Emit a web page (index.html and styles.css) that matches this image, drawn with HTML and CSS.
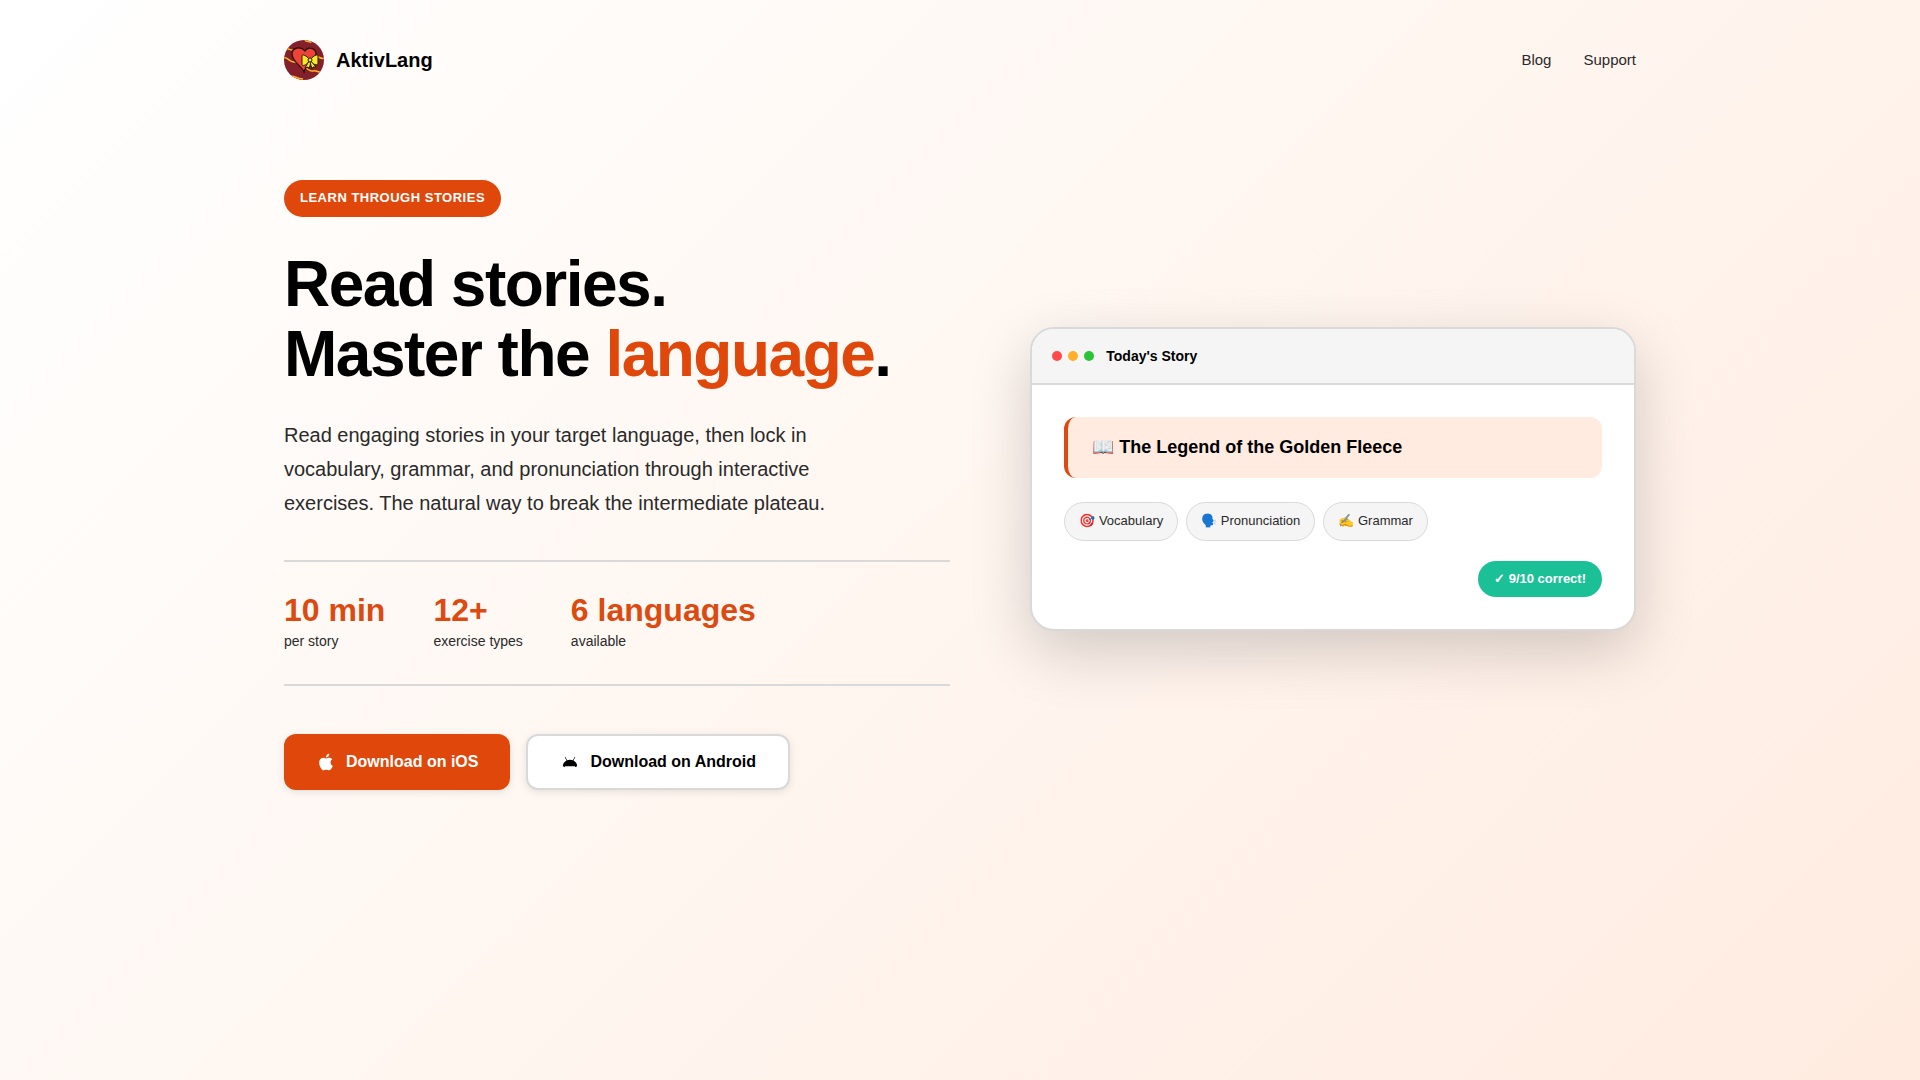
FILE: index.html
```html
<!DOCTYPE html>
<html lang="en">
<head>
<meta charset="UTF-8">
<meta name="viewport" content="width=device-width, initial-scale=1">
<title>AktivLang</title>
<link rel="stylesheet" href="styles.css">
</head>
<body>
	<header class="container header">
		<a class="brand" href="#">
			<svg class="logo" viewBox="0 0 40 40" aria-hidden="true">
				<clipPath id="round"><circle cx="20" cy="20" r="20"/></clipPath>
				<g clip-path="url(#round)">
					<rect width="40" height="40" fill="#84202a"/>
					<g fill="none" stroke="#fbb52c" stroke-width="1.5">
						<path d="M21 0c1 3 5 0 6 3"/>
						<path d="M2 9c3-1 4 2 8 1"/>
						<path d="M0 18c3-2 5 4 10 4s6 4 10 5 5 5 9 4 5 2 9 1"/>
						<path d="M32 17c2-2 4 3 9 1"/>
						<path d="M6 37c4-3 5 2 13 2"/>
					</g>
					<path d="M20 32C18 26 8 22 8 14c0-7 9-8 13-3 3-5 11-3 11 3 0 6-10 10-12 18z" fill="#ef4238" stroke="#28130f" stroke-width="1.3"/>
					<g fill="#f9e72c" stroke="#28200c" stroke-width="1" stroke-linejoin="round">
						<path d="M25 21l-4 7 3-1 1 2 2-7z"/>
						<path d="M27 21l5 6-3 0-1 2-2-7z"/>
						<path d="M25 19c-3-4-7-5-7-3v8c0 3 5 1 7-3z"/>
						<path d="M27 19c3-4 7-5 7-3v7c0 3-5 2-7-2z"/>
						<circle cx="26" cy="20" r="2"/>
					</g>
				</g>
			</svg>
			<span>AktivLang</span>
		</a>
		<nav class="nav">
			<a href="#">Blog</a>
			<a href="#">Support</a>
		</nav>
	</header>

	<main class="container hero">
		<section class="hero-text">
			<span class="badge">Learn through stories</span>
			<h1>Read stories.<br>Master the <span class="accent">language</span>.</h1>
			<p class="lead">Read engaging stories in your target language, then lock in vocabulary, grammar, and pronunciation through interactive exercises. The natural way to break the intermediate plateau.</p>
			<div class="stats">
				<div class="stat">
					<strong>10 min</strong>
					<span>per story</span>
				</div>
				<div class="stat">
					<strong>12+</strong>
					<span>exercise types</span>
				</div>
				<div class="stat">
					<strong>6 languages</strong>
					<span>available</span>
				</div>
			</div>
			<div class="actions">
				<a class="btn btn-primary" href="#">
					<svg viewBox="0 0 24 24" aria-hidden="true"><path d="M18.71 19.5c-.83 1.24-1.71 2.45-3.05 2.47-1.34.03-1.77-.79-3.29-.79-1.53 0-2 .77-3.27.82-1.31.05-2.3-1.32-3.14-2.53C4.25 17 2.94 12.45 4.7 9.39c.87-1.52 2.43-2.48 4.12-2.51 1.28-.02 2.5.87 3.29.87.78 0 2.26-1.07 3.81-.91.65.03 2.47.26 3.64 1.98-.09.06-2.17 1.28-2.15 3.81.03 3.02 2.65 4.03 2.68 4.04-.03.07-.42 1.44-1.38 2.83M13 3.5c.73-.83 1.94-1.46 2.94-1.5.13 1.17-.34 2.35-1.04 3.19-.69.85-1.83 1.51-2.95 1.42-.15-1.15.41-2.35 1.05-3.11z"/></svg>
					<span>Download on iOS</span>
				</a>
				<a class="btn btn-secondary" href="#">
					<svg viewBox="0 0 24 24" aria-hidden="true"><path d="M3.400 17c.2-3.200 1.900-5.600 4.500-6.900L5.600 6l.6-.3 2.400 4.100c2.100-.8 4.700-.8 6.800 0l2.400-4.100.6.300-2.300 4.100c2.600 1.300 4.300 3.700 4.500 6.900h-1v1.100h-1.400v-1.100H5.800v1.100H4.400v-1.100z"/></svg>
					<span>Download on Android</span>
				</a>
			</div>
		</section>

		<section class="hero-visual">
			<div class="card">
				<div class="card-header">
					<div class="dots">
						<span class="dot red"></span>
						<span class="dot yellow"></span>
						<span class="dot green"></span>
					</div>
					<span class="card-title">Today's Story</span>
				</div>
				<div class="card-body">
					<div class="story">📖 The Legend of the Golden Fleece</div>
					<div class="chips">
						<span class="chip">🎯 Vocabulary</span>
						<span class="chip">🗣️ Pronunciation</span>
						<span class="chip">✍️ Grammar</span>
					</div>
					<div class="score">✓ 9/10 correct!</div>
				</div>
			</div>
		</section>
	</main>
</body>
</html>
```
FILE: styles.css
```css
* {
	box-sizing: border-box;
}
body {
	margin: 0;
	min-height: 100vh;
	background: linear-gradient(135deg, #fff 0%, #fff6f0 50%, #ffebe0 100%);
	font-family: "Liberation Sans", Arial, sans-serif;
	line-height: 1.6;
	color: #2a2a2a;
}
a {
	color: inherit;
	text-decoration: none;
}
.container {
	max-width: 1400px;
	margin: 0 auto;
	padding: 0 24px;
}

/* header */
.header {
	display: flex;
	justify-content: space-between;
	align-items: center;
	padding-top: 40px;
	padding-bottom: 40px;
}
.brand {
	display: flex;
	align-items: center;
	gap: 12px;
	font-size: 20px;
	font-weight: bold;
	color: #000;
}
.logo {
	width: 40px;
	height: 40px;
}
.nav {
	display: flex;
	gap: 32px;
	font-size: 15px;
}

/* hero */
.hero {
	display: grid;
	grid-template-columns: 1.1fr 1fr;
	gap: 80px;
	align-items: center;
	padding-top: 60px;
	padding-bottom: 80px;
}
.hero-text {
	display: flex;
	flex-direction: column;
	align-items: flex-start;
}
.badge {
	padding: 8px 16px;
	border-radius: 20px;
	background: #e0480b;
	color: #fff;
	font-size: 13px;
	font-weight: bold;
	letter-spacing: 0.5px;
	text-transform: uppercase;
}
h1 {
	margin: 32px 0 28px;
	font-size: 64px;
	line-height: 1.1;
	letter-spacing: -1.5px;
	color: #000;
}
.accent {
	color: #e0480b;
}
.lead {
	max-width: 560px;
	margin: 0 0 40px;
	font-size: 20px;
	line-height: 34px;
}
.stats {
	display: flex;
	gap: 48px;
	width: 100%;
	margin-bottom: 48px;
	padding: 32px 0;
	border-top: 2px solid #d9d9d9;
	border-bottom: 2px solid #d9d9d9;
}
.stat {
	display: flex;
	flex-direction: column;
	gap: 4px;
	font-size: 14px;
}
.stat strong {
	font-size: 32px;
	line-height: 32px;
	color: #dc4a10;
}
.actions {
	display: flex;
	gap: 16px;
}
.btn {
	display: flex;
	align-items: center;
	gap: 10px;
	height: 56px;
	padding: 0 32px;
	border-radius: 12px;
	box-shadow: 0 2px 8px rgba(0, 0, 0, 0.1);
	font-size: 16px;
	font-weight: bold;
}
.btn svg {
	width: 20px;
	height: 20px;
	fill: currentColor;
}
.btn-primary {
	background: #e0480b;
	color: #fff;
}
.btn-secondary {
	border: 2px solid #d9d9d9;
	background: #fff;
	color: #000;
}

/* story card */
.hero-visual {
	padding-bottom: 12px;
}
.card {
	overflow: hidden;
	border: 2px solid #d9d9d9;
	border-radius: 24px;
	background: #fff;
	box-shadow: 0 20px 60px rgba(0, 0, 0, 0.18);
}
.card-header {
	display: flex;
	align-items: center;
	gap: 12px;
	padding: 16px 20px;
	border-bottom: 2px solid #d9d9d9;
	background: #f5f5f5;
}
.dots {
	display: flex;
	gap: 6px;
}
.dot {
	width: 10px;
	height: 10px;
	border-radius: 50%;
}
.red {
	background: #ff4b4b;
}
.yellow {
	background: #ffb02a;
}
.green {
	background: #2bc435;
}
.card-title {
	font-size: 14px;
	font-weight: bold;
	color: #000;
}
.card-body {
	display: flex;
	flex-direction: column;
	padding: 32px;
}
.story {
	margin-bottom: 24px;
	padding: 16px 24px;
	border-left: 4px solid #dc4a10;
	border-radius: 12px;
	background: #ffebe0;
	font-size: 18px;
	font-weight: bold;
	color: #000;
}
.chips {
	display: flex;
	flex-wrap: wrap;
	gap: 8px;
	margin-bottom: 20px;
}
.chip {
	padding: 8px 14px;
	border: 1px solid #d9d9d9;
	border-radius: 20px;
	background: #f5f5f5;
	font-size: 13px;
}
.score {
	align-self: flex-end;
	padding: 8px 16px;
	border-radius: 20px;
	background: #1bc097;
	color: #fff;
	font-size: 13px;
	font-weight: bold;
}

@media (max-width: 900px) {
	.hero {
		grid-template-columns: 1fr;
	}
	.stats, .actions {
		flex-wrap: wrap;
	}
}
```
